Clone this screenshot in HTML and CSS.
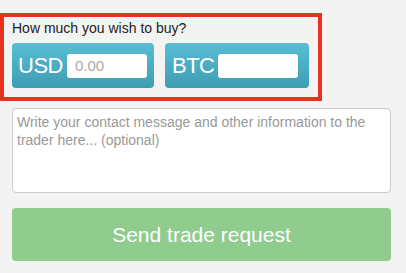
FILE: index.html
```html
<!DOCTYPE html>
<html lang="en">
<head>
    <meta charset="UTF-8">
    <meta name="viewport" content="width=device-width, initial-scale=1.0">
    <title>Trade request</title>
    <link rel="stylesheet" href="styles.css">
</head>
<body>
    <div class="trade-form">
        <div class="buy-box">
            <p class="buy-label">How much you wish to buy?</p>
            <div class="amount-row">
                <div class="amount-box">
                    <span class="currency">USD</span>
                    <input class="amount-input" type="text" placeholder="0.00">
                </div>
                <div class="amount-box btc">
                    <span class="currency">BTC</span>
                    <input class="amount-input" type="text">
                </div>
            </div>
        </div>
        <textarea class="message" placeholder="Write your contact message and other information to the trader here... (optional)"></textarea>
        <button class="send-btn">Send trade request</button>
    </div>
</body>
</html>
```

FILE: styles.css
```css
*{
    margin: 0;
    padding: 0;
    box-sizing: border-box;
}
body{
    background-color: #f3f3f3;
    font-family: "Liberation Sans", Arial, sans-serif;
}
.trade-form{
    padding: 13px 15px 0 0;
    display: flex;
    flex-direction: column;
}
.buy-box{
    width: 322px;
    border: 4px solid #e8321e;
    padding: 3px 9px 9px 8px;
}
.buy-label{
    font-size: 14px;
    line-height: 16px;
    color: #222;
    margin-bottom: 7px;
}
.amount-row{
    display: flex;
    gap: 11px;
}
.amount-box{
    width: 142px;
    height: 45px;
    display: flex;
    align-items: center;
    padding: 0 8px 0 6px;
    gap: 4px;
    border-radius: 4px;
    background: linear-gradient(#58bdd4, #3e9db3);
}
.amount-box.btc{
    width: 144px;
    padding-left: 7px;
    gap: 3px;
}
.currency{
    color: #fff;
    font-size: 22px;
    letter-spacing: -0.5px;
}
.amount-input{
    width: 80px;
    height: 24px;
    border: none;
    border-radius: 3px;
    background: #fff;
    padding: 0 8px;
    font-family: inherit;
    font-size: 15px;
    color: #333;
    outline: none;
}
.amount-input::placeholder{
    color: #a9a9a9;
}
.message{
    margin: 7px 0 0 12px;
    height: 85px;
    border: 1px solid #ccc;
    border-radius: 4px;
    background: #fff;
    padding: 4px 4px;
    font-family: inherit;
    font-size: 14px;
    line-height: 18px;
    resize: none;
}
.message::placeholder{
    color: #999;
}
.send-btn{
    margin: 15px 0 0 12px;
    height: 53px;
    border: none;
    border-radius: 4px;
    background-color: #8fcc8e;
    color: #fff;
    font-family: inherit;
    font-size: 21px;
}
```
